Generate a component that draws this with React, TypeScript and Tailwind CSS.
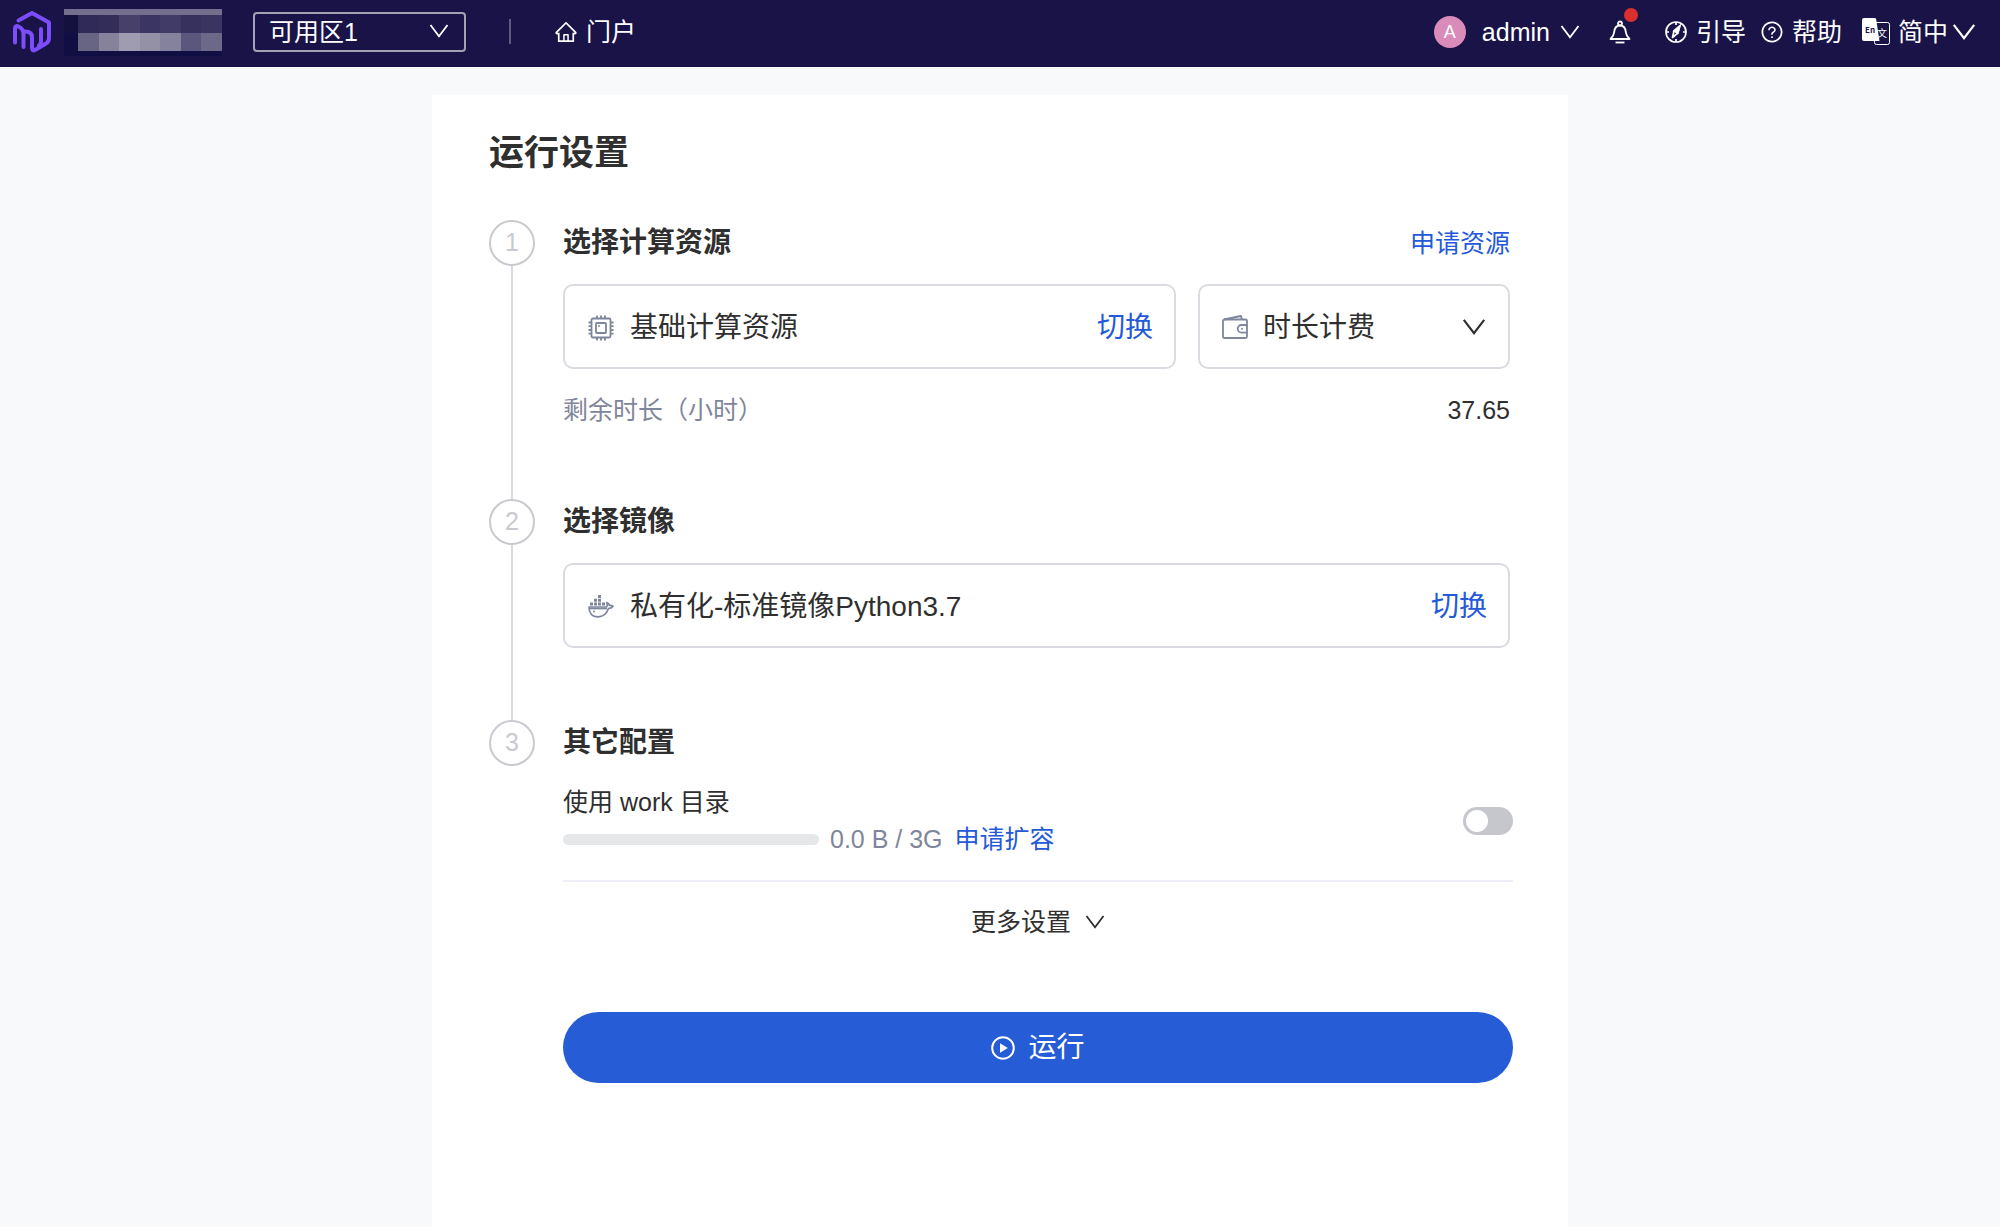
import React, { useState } from "react";
import { AiOutlineHome, AiOutlineQuestionCircle } from "react-icons/ai";

const mosaicTop = ["#15113f", "#2f2a58", "#332d5a", "#46406a", "#3b3563", "#413b68", "#37315e", "#3a3461"];
const mosaicBottom = ["#110e43", "#686484", "#86829c", "#9f9bb0", "#9490a6", "#85829d", "#5b567b", "#6c6888"];

function Logo() {
  return (
    <svg viewBox="10 9 44 46" className="h-[46px] w-[44px]" fill="none" stroke="#7b4dff" strokeWidth="4" strokeLinecap="round" strokeLinejoin="round">
      <path d="M18.5 20.5 32 13l17 9.5V38c0 3-1 4.500-3 5.500l-11 6.500c-2 1-3 0-3-2V37c0-4-3.500-6-8.500-5.500" />
      <path d="M15 42.500V28.500c0-2.500 1.500-3 3.500-2 3 1.500 5 3.500 5 7V47" />
      <path d="M41 29v12c0 2-.5 3.500-2 4.500" />
    </svg>
  );
}

function DownIcon({ className }: { className: string }) {
  return (
    <svg viewBox="0 0 20 20" className={className} fill="none" stroke="currentColor" strokeWidth="1.8">
      <path d="M1.500 4 10 15.200 18.500 4" />
    </svg>
  );
}

function BellIcon() {
  return (
    <svg viewBox="0 0 24 24" className="h-6 w-6" fill="none" stroke="currentColor" strokeWidth="1.8" strokeLinejoin="round">
      <circle cx="12" cy="3.5" r="2" />
      <path d="M12 5.500c-4 0-5.500 3-5.800 6.500C6 15 5 16.500 2.500 19h19C19 16.500 18 15 17.800 12 17.500 8.500 16 5.500 12 5.500Z" />
      <path d="M7.500 22.500h9" />
    </svg>
  );
}

function CompassIcon() {
  return (
    <svg viewBox="0 0 24 24" className="h-6 w-6" fill="none" stroke="currentColor" strokeWidth="1.7">
      <circle cx="12" cy="12" r="10" />
      <path d="M12 2v3M12 19v3M2 12h3M19 12h3" />
      <path d="M15.800 6 10 11 8.500 17.500l5.300-4.500Z" strokeLinejoin="round" />
      <path d="M15.800 6 10 11l3.800 2Z" fill="currentColor" />
    </svg>
  );
}

function TranslateIcon() {
  return (
    <svg viewBox="0 0 28 28" className="h-7 w-7" fontFamily="Noto Sans CJK SC, sans-serif">
      <path d="M14 4.500h11.500a2 2 0 0 1 2 2v18a2 2 0 0 1-2 2H14.500a2 2 0 0 1-2-2V22" fill="none" stroke="#fff" />
      <path d="M2 0h10.500c1 0 1.500.5 1.700 1.500L17.500 23H2a2 2 0 0 1-2-2V2a2 2 0 0 1 2-2Z" fill="#fff" />
      <text x="3" y="15" fontSize="8" fontWeight="700" fill="#1a1347">
        En
      </text>
      <text x="15" y="18.5" fontSize="10" fill="#fff">
        文
      </text>
    </svg>
  );
}

function ChipIcon() {
  return (
    <svg viewBox="0 0 26 26" className="h-[26px] w-[26px] text-[#7f869b]" fill="none" stroke="currentColor" strokeWidth="1.8">
      <rect x="3.5" y="3.5" width="19" height="19" rx="1.5" />
      <rect x="8" y="8" width="10" height="10" rx="1" />
      <path d="M9 .5v3M13 .5v3M17 .5v3M9 22.500v3M13 22.500v3M17 22.500v3M.5 7.500h3M.5 11.200h3M.5 15h3M.5 18.700h3M22.500 7.500h3M22.500 11.200h3M22.500 15h3M22.500 18.700h3" />
      <circle cx="11" cy="11" r="1" fill="currentColor" stroke="none" />
    </svg>
  );
}

function WalletIcon() {
  return (
    <svg viewBox="0 0 26 26" className="h-[26px] w-[26px] text-[#7f869b]" fill="none" stroke="currentColor" strokeWidth="1.8" strokeLinejoin="round">
      <rect x="1" y="5.5" width="24" height="18.5" rx="1.5" />
      <path d="M2 5.500 19 2l1 3.500" />
      <path d="M25 11h-5.500a3.800 3.800 0 0 0 0 7.600H25" />
      <circle cx="20" cy="14.8" r="1" fill="currentColor" stroke="none" />
    </svg>
  );
}

function DockerIcon() {
  return (
    <svg viewBox="0 0 26 26" className="h-[26px] w-[26px] text-[#7f869b]" fill="none" stroke="currentColor" strokeWidth="1.7" strokeLinejoin="round">
      <path d="M1 13h17.500c1-1 .8-3 .3-4.500 1.700.7 2.500 1.700 2.700 3 1.300-.3 2.500 0 3.500.7-1 1.600-2.500 2.200-4.500 2.300C18.500 20 15 22.800 10 22.800 4 22.800 1 19 1 13Z" />
      <path d="M1 14.500h18" />
      <path fill="currentColor" stroke="none" d="M2 8.500h3v3H2zM6 8.500h3v3H6zM10 8.500h3v3h-3zM14 8.500h3v3h-3zM6 4.800h3v3H6zM10 4.800h3v3h-3zM10 1h3v3h-3z" />
      <circle cx="6" cy="17.5" r="1" fill="currentColor" stroke="none" />
    </svg>
  );
}

function PlayIcon() {
  return (
    <svg viewBox="0 0 24 24" className="h-6 w-6" fill="none" stroke="currentColor" strokeWidth="2">
      <circle cx="12" cy="12" r="10.8" />
      <path d="M9 7.200v9.600l7.800-4.800Z" fill="currentColor" stroke="none" />
    </svg>
  );
}

function Header() {
  return (
    <header className="flex h-[67px] items-center bg-[#1a1347] pb-1 pl-[10px] pr-6 text-[25px] leading-8 text-white">
      <Logo />
      <div className="ml-[10px] mt-[2px] w-[158px]" aria-hidden="true">
        <div className="h-[6px] bg-[#746f8c]" />
        <div className="flex">
          {mosaicTop.map((color, idx) => (
            <div key={idx} className="h-[18px] w-[14px] not-first:flex-1" style={{ backgroundColor: color }} />
          ))}
        </div>
        <div className="flex">
          {mosaicBottom.map((color, idx) => (
            <div key={idx} className="h-[18px] w-[14px] not-first:flex-1" style={{ backgroundColor: color }} />
          ))}
        </div>
        <div className="h-[5px] bg-[#110e43]" />
      </div>
      <div className="relative ml-[31px]">
        <select aria-label="可用区" className="block h-10 w-[213px] appearance-none rounded border-2 border-[#a3a1b5] bg-transparent pl-[14px] leading-8">
          <option>可用区1</option>
        </select>
        <DownIcon className="pointer-events-none absolute right-[17px] top-[9px] h-5 w-5" />
      </div>
      <div className="ml-[43px] h-[25px] w-[2px] bg-[#5f5b7e]" />
      <a href="#" className="ml-[43px] flex items-center gap-2">
        <AiOutlineHome className="h-6 w-6" />
        门户
      </a>

      <button className="ml-auto flex items-center">
        <span className="flex h-8 w-8 items-center justify-center rounded-full bg-[#d98bb9] text-lg">A</span>
        <span className="ml-4">admin</span>
        <DownIcon className="ml-[10px] h-5 w-5" />
      </button>
      <button aria-label="通知" className="relative ml-7">
        <BellIcon />
        <span className="absolute -right-[6px] -top-3 h-[14px] w-[14px] rounded-full bg-[#d9302f]" />
      </button>
      <a href="#" className="ml-8 flex items-center gap-2">
        <CompassIcon />
        引导
      </a>
      <a href="#" className="ml-[14px] flex items-center gap-2">
        <AiOutlineQuestionCircle className="h-6 w-6" />
        帮助
      </a>
      <button className="ml-5 flex items-center">
        <TranslateIcon />
        <span className="ml-2">简中</span>
        <DownIcon className="ml-1 h-6 w-6" />
      </button>
    </header>
  );
}

type StepProps = {
  index: number;
  title: string;
  last?: boolean;
  extra?: React.ReactNode;
  children: React.ReactNode;
};

function Step({ index, title, last, extra, children }: StepProps) {
  return (
    <li className="flex gap-7">
      <div className="flex w-[46px] shrink-0 flex-col items-center">
        <div className="flex h-[46px] w-[46px] shrink-0 items-center justify-center rounded-full border-2 border-[#c9cad0] text-[25px] text-[#c9cad0]">
          {index}
        </div>
        {!last && <div className="w-[2px] flex-1 bg-[#d9d9df]" />}
      </div>
      <div className={last ? "flex-1" : "flex-1 pr-[3px]"}>
        <div className="flex h-[46px] items-center justify-between">
          <h2 className="text-[28px] font-bold leading-10">{title}</h2>
          {extra}
        </div>
        {children}
      </div>
    </li>
  );
}

export default function App() {
  const [useWork, setUseWork] = useState(false);

  return (
    <div className="flex min-h-screen flex-col bg-[#f8f9fb] font-['Liberation_Sans','Noto_Sans_CJK_SC',sans-serif] text-[#2f2f2f]">
      <Header />
      <main className="mx-auto mt-7 w-full max-w-[1136px] flex-1 bg-white pb-36 pl-[57px] pr-[55px] pt-[33px]">
        <h1 className="text-[35px] font-bold leading-[50px]">运行设置</h1>
        <ol className="mt-[42px]">
          <Step
            index={1}
            title="选择计算资源"
            extra={
              <a href="#" className="text-[25px] leading-9 text-[#2459d9]">
                申请资源
              </a>
            }
          >
            <div className="mt-[18px] flex gap-[22px]">
              <div className="flex h-[85px] flex-1 items-center rounded-[10px] border-2 border-[#dadbe1] pl-[23px] pr-[21px] pt-[2px] text-[28px]">
                <ChipIcon />
                <span className="ml-4">基础计算资源</span>
                <button className="ml-auto text-[#2459d9]">切换</button>
              </div>
              <div className="relative w-[312px] text-[28px]">
                <select aria-label="计费方式" className="h-[85px] w-full appearance-none rounded-[10px] border-2 border-[#dadbe1] bg-transparent pl-[63px] pt-[2px]">
                  <option>时长计费</option>
                </select>
                <div className="pointer-events-none absolute inset-0 flex items-center justify-between px-6">
                  <WalletIcon />
                  <DownIcon className="h-6 w-6" />
                </div>
              </div>
            </div>
            <div className="mb-[71px] mt-[23px] flex items-center justify-between text-[25px] leading-9">
              <span className="text-[#7f869b]">剩余时长（小时）</span>
              <span>37.65</span>
            </div>
          </Step>
          <Step index={2} title="选择镜像">
            <div className="mb-[72px] mt-[18px] flex h-[85px] items-center rounded-[10px] border-2 border-[#dadbe1] pl-[23px] pr-[21px] pt-[2px] text-[28px]">
              <DockerIcon />
              <span className="ml-4">私有化-标准镜像Python3.7</span>
              <button className="ml-auto text-[#2459d9]">切换</button>
            </div>
          </Step>
          <Step index={3} title="其它配置" last>
            <div className="mt-[18px] flex items-center justify-between border-b-2 border-[#eeeef8] pb-[22px] text-[25px]">
              <div>
                <label htmlFor="work" className="block leading-9">
                  使用 work 目录
                </label>
                <div className="flex items-center leading-[38px]">
                  <div role="progressbar" aria-label="使用量" aria-valuenow={0} className="h-[11px] w-64 rounded-full bg-[#e6e7e9]" />
                  <span className="ml-[11px] text-[#7f869b]">0.0 B / 3G</span>
                  <a href="#" className="ml-3 text-[#2459d9]">
                    申请扩容
                  </a>
                </div>
              </div>
              <input
                id="work"
                type="checkbox"
                role="switch"
                checked={useWork}
                onChange={(e) => setUseWork(e.target.checked)}
                className="flex h-7 w-[50px] appearance-none items-center rounded-full bg-[#c6c7cd] px-[3px] before:h-[22px] before:w-[22px] before:rounded-full before:bg-white checked:justify-end checked:bg-[#265cd6]"
              />
            </div>
            <button className="mx-auto mt-[22px] flex items-center gap-[14px] text-[25px] leading-9">
              更多设置
              <DownIcon className="h-5 w-5" />
            </button>
            <button className="mt-[72px] flex h-[71px] w-full items-center justify-center gap-[13px] rounded-full bg-[#265cd6] text-[28px] text-white">
              <PlayIcon />
              运行
            </button>
          </Step>
        </ol>
      </main>
    </div>
  );
}
